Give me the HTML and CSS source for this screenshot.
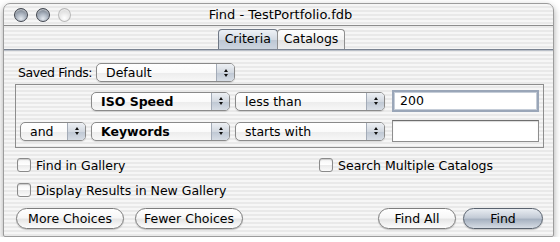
FILE: index.html
```html
<!DOCTYPE html>
<html>
<head>
    <title>Find</title>
    <meta charset="utf-8">
    <link rel="stylesheet" href="styles.css">
</head>
<body>
    <div class="window">
        <div class="titlebar">
            <div class="lights">
                <span class="light"></span>
                <span class="light"></span>
                <span class="light off"></span>
            </div>
            <div class="title">Find - TestPortfolio.fdb</div>
            <div></div>
        </div>
        <div class="tabstrip">
            <div class="tab active">Criteria</div>
            <div class="tab">Catalogs</div>
        </div>
        <div class="tabline"></div>
        <div class="content">
            <div class="saved">
                <span class="label">Saved Finds:</span>
                <div class="popup pop-default"><span class="val">Default</span><span class="arrows"></span></div>
            </div>
            <div class="criteria">
                <div class="row">
                    <div class="pop-and"></div>
                    <div class="popup pop-field"><span class="val bold">ISO Speed</span><span class="arrows"></span></div>
                    <div class="popup pop-op"><span class="val">less than</span><span class="arrows"></span></div>
                    <div class="textfield focus">200</div>
                </div>
                <div class="row">
                    <div class="popup pop-and"><span class="val">and</span><span class="arrows"></span></div>
                    <div class="popup pop-field"><span class="val bold">Keywords</span><span class="arrows"></span></div>
                    <div class="popup pop-op"><span class="val">starts with</span><span class="arrows"></span></div>
                    <div class="textfield"></div>
                </div>
            </div>
            <div class="options">
                <label class="check"><span class="box"></span>Find in Gallery</label>
                <label class="check"><span class="box"></span>Search Multiple Catalogs</label>
                <label class="check"><span class="box"></span>Display Results in New Gallery</label>
            </div>
            <div class="buttons">
                <button class="btn wide">More Choices</button>
                <button class="btn wide">Fewer Choices</button>
                <div class="grow"></div>
                <button class="btn findall">Find All</button>
                <button class="btn find default">Find</button>
            </div>
        </div>
    </div>
</body>
</html>
```

FILE: styles.css
```css
*{
    margin: 0;
    padding: 0;
    box-sizing: border-box;
}
body{
    background: #ffffff;
    font-family: "DejaVu Sans", sans-serif;
    font-size: 12.5px;
    color: #000000;
}
.window{
    margin: 3px 0 0 3px;
    width: 551px;
    height: 234px;
    border: 1px solid #9c9c9c;
    border-radius: 7px 7px 2px 2px;
    overflow: hidden;
    background: repeating-linear-gradient(#f6f6f6 0, #f6f6f6 2px, #e9e9e9 2px, #e9e9e9 4px);
    box-shadow: 0 3px 7px rgba(0,0,0,0.35);
}

/* title bar */
.titlebar{
    height: 22px;
    display: grid;
    grid-template-columns: 1fr auto 1fr;
    align-items: center;
    border-bottom: 1px solid #8c8c8c;
}
.lights{
    display: flex;
    gap: 8px;
    padding-left: 10px;
}
.light{
    width: 14px;
    height: 14px;
    border-radius: 50%;
    border: 1px solid #41464f;
    background: radial-gradient(circle at 50% 80%, #e4e9ef 0, #a9b2be 45%, #5f6773 100%);
    box-shadow: inset 0 1px 1px rgba(255,255,255,0.6);
}
.light.off{
    width: 13px;
    border-color: #b9b9b9;
    background: radial-gradient(circle at 50% 75%, #ffffff 0, #e3e3e3 60%, #cfcfcf 100%);
}
.title{
    font-size: 13px;
    padding-left: 4px;
}

/* tabs */
.tabstrip{
    height: 23px;
    display: flex;
    justify-content: center;
    align-items: flex-end;
    padding-left: 6px;
}
.tab{
    height: 20px;
    padding: 0 6px;
    line-height: 18px;
    border: 1px solid #8f8f8f;
    border-bottom: 0;
    border-radius: 4px 4px 0 0;
    background: linear-gradient(#ffffff, #f3f3f3 50%, #e2e2e2 51%, #f0f0f0);
}
.tab.active{
    border-color: #6f7886;
    background: linear-gradient(#eef2f6, #d3dae3 50%, #bcc6d3 51%, #cdd5df);
    margin-right: -1px;
}
.tabline{
    height: 2px;
    border-top: 1px solid #7a8391;
    border-bottom: 1px solid #b9bfc8;
}

.content{
    padding: 12px 9px 0 11px;
}

/* saved finds */
.saved{
    display: flex;
    align-items: center;
    height: 19px;
}
.label{
    margin-left: 3px;
    width: 78px;
    white-space: nowrap;
    letter-spacing: -0.4px;
}

/* popup buttons */
.popup{
    height: 19px;
    display: flex;
    border: 1px solid #8a8a8a;
    border-radius: 5px;
    overflow: hidden;
    background: linear-gradient(#ffffff, #fbfbfb 50%, #ececec 51%, #f7f7f7);
    box-shadow: 0 1px 1px rgba(0,0,0,0.12);
}
.popup .val{
    flex: 1;
    padding-left: 9px;
    line-height: 17px;
    white-space: nowrap;
}
.bold{
    font-weight: bold;
}
.arrows{
    width: 18px;
    border-left: 1px solid #a3abb7;
    background: linear-gradient(#edf0f4, #d3d9e1 50%, #bec7d3 51%, #d7dde5);
    display: flex;
    flex-direction: column;
    align-items: center;
    justify-content: center;
    gap: 2px;
}
.arrows::before{
    content: "";
    border-left: 2.5px solid transparent;
    border-right: 2.5px solid transparent;
    border-bottom: 3px solid #111111;
}
.arrows::after{
    content: "";
    border-left: 2.5px solid transparent;
    border-right: 2.5px solid transparent;
    border-top: 3px solid #111111;
}
.pop-default{
    width: 139px;
}
.pop-and{
    width: 66px;
    margin-right: 5px;
}
.pop-field{
    width: 139px;
    margin-right: 5px;
}
.pop-op{
    width: 150px;
    margin-right: 7px;
}

/* criteria box */
.criteria{
    margin-top: 2px;
    width: 529px;
    border: 1px solid #8d8d8d;
    padding: 5px 4px 5px 4px;
    display: flex;
    flex-direction: column;
    gap: 8px;
}
.row{
    height: 22px;
    display: flex;
    align-items: center;
}
.textfield{
    width: 147px;
    height: 22px;
    border: 1px solid #8e8e8e;
    border-top-color: #6e6e6e;
    background: #ffffff;
    box-shadow: inset 0 1px 1px rgba(0,0,0,0.15);
    padding-left: 7px;
    line-height: 20px;
}
.textfield.focus{
    border: 2px solid #9aa6b8;
    box-shadow: inset 0 0 0 1px #c5cdd8;
    line-height: 18px;
    padding-left: 6px;
}

/* checkboxes */
.options{
    margin-top: 7px;
    display: grid;
    grid-template-columns: 302px 1fr;
    grid-auto-rows: 20px;
    row-gap: 5px;
}
.check{
    display: flex;
    align-items: center;
    padding-left: 2px;
}
.box{
    width: 14px;
    height: 14px;
    margin-right: 5px;
    border: 1px solid #8a8a8a;
    border-radius: 3px;
    background: linear-gradient(#f4f4f4, #ffffff 50%, #eaeaea 51%, #fafafa);
    box-shadow: inset 0 1px 1px rgba(0,0,0,0.18);
}

/* push buttons */
.buttons{
    margin-top: 8px;
    display: flex;
    align-items: center;
    padding-left: 1px;
}
.grow{
    flex: 1;
}
.btn{
    height: 21px;
    border: 1px solid #7d7d7d;
    border-radius: 11px;
    font-family: "DejaVu Sans", sans-serif;
    font-size: 12.5px;
    color: #000000;
    background: linear-gradient(#ffffff, #f7f7f7 45%, #e6e6e6 55%, #fdfdfd);
    box-shadow: 0 1px 1px rgba(0,0,0,0.2);
}
.wide{
    width: 108px;
    margin-right: 11px;
}
.findall{
    width: 78px;
    margin-right: 7px;
}
.find{
    width: 80px;
    margin-right: 1px;
}
.btn.default{
    border-color: #59626e;
    background: linear-gradient(#e9edf2, #c4ccd7 45%, #a7b2c1 55%, #d6dce4);
}
```
